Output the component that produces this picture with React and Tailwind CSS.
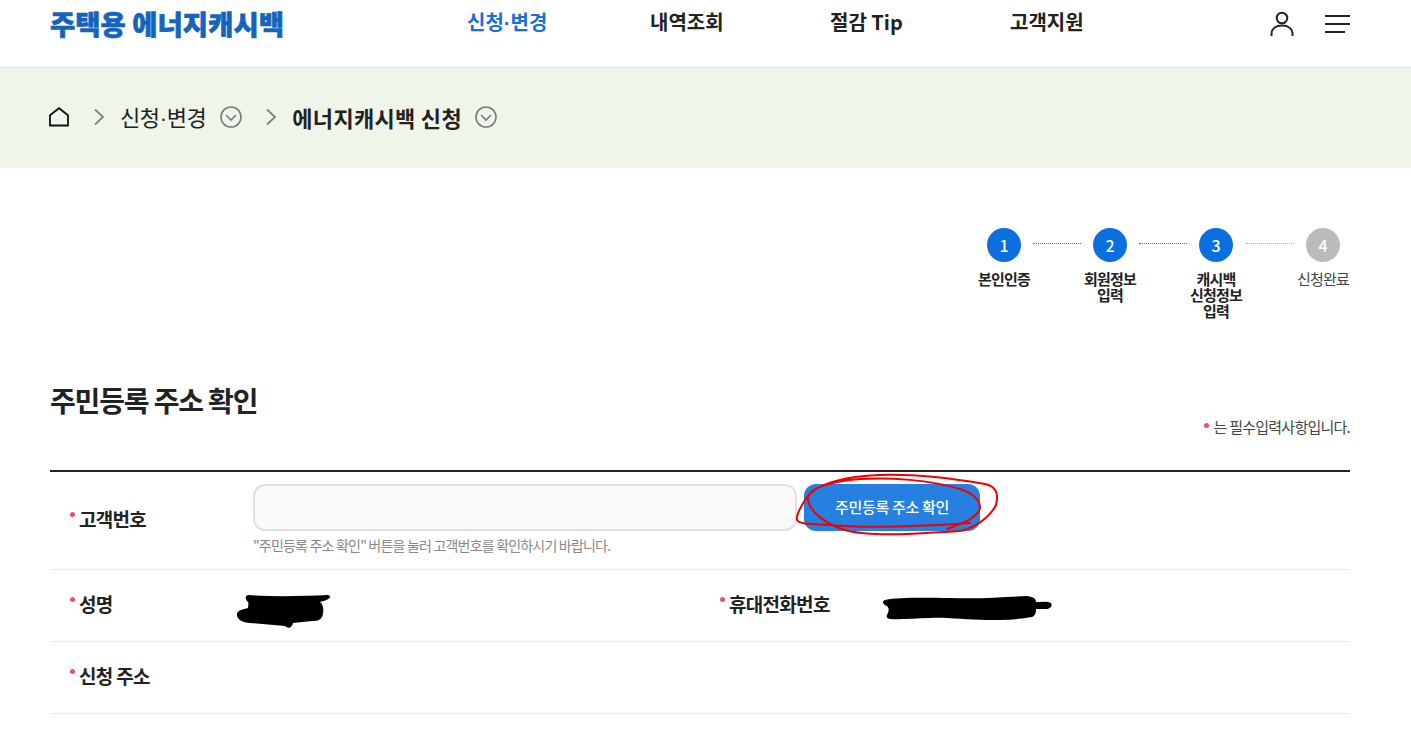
import React from "react";

const font = { fontFamily: '"Noto Sans CJK KR", "Noto Sans", sans-serif' };

const steps = [
  { no: 1, label: ["본인인증"], done: true },
  { no: 2, label: ["회원정보", "입력"], done: true },
  { no: 3, label: ["캐시백", "신청정보", "입력"], done: true },
  { no: 4, label: ["신청완료"], done: false },
];

const HomeIcon = () => (
  <svg width="20" height="20" viewBox="0 0 20 20" fill="none" stroke="#111" strokeWidth="1.8">
    <path d="M1 18.5V8.2L10 1.2L19 8.2V18.5Z" />
  </svg>
);

const Chevron = () => (
  <svg width="12" height="18" viewBox="0 0 12 18" fill="none" stroke="#808080" strokeWidth="1.8">
    <path d="M2 1.5L10 9L2 16.5" />
  </svg>
);

const CircleDown = () => (
  <svg width="22" height="22" viewBox="0 0 22 22" fill="none" stroke="#7b7b7b" strokeWidth="1.6">
    <circle cx="11" cy="11" r="10" />
    <path d="M6 9L11 14L16 9" />
  </svg>
);

const UserIcon = () => (
  <svg width="24" height="26" viewBox="0 0 24 26" fill="none" stroke="#222" strokeWidth="2">
    <circle cx="12" cy="7" r="5.3" />
    <path d="M1.5 25V23C1.5 17.5 6 14.5 12 14.5C18 14.5 22.5 17.5 22.5 23V25" />
  </svg>
);

const MiddleDot = () => <span className="font-['Liberation_Sans']">·</span>;

const Label = ({ children }) => (
  <span className="relative text-[19px] font-semibold leading-none text-[#222] tracking-[-0.7px]">
    <span className="absolute left-[-9px] top-[7px] w-[5px] h-[5px] rounded-full bg-[#ec4d77]" />
    {children}
  </span>
);

export default function App() {
  return (
    <div className="h-[729px] overflow-hidden bg-white relative" style={font}>
      {/* Header */}
      <header className="h-[68px] border-b border-[#e2e2e2] flex pl-[50px] pr-[61px]">
        <div className="w-[417px] text-[#1464bc] text-[27.5px] font-black leading-[47px] whitespace-nowrap [-webkit-text-stroke:0.6px_#1464bc]">
          주택용 에너지캐시백
        </div>
        <nav className="flex h-[44px] items-center text-[20px] font-semibold text-[#222]">
          <span className="text-[#1a6fe0] w-[183px]">신청<MiddleDot />변경</span>
          <span className="w-[180px]">내역조회</span>
          <span className="w-[180px]">절감 Tip</span>
          <span>고객지원</span>
        </nav>
        <div className="ml-auto flex items-start gap-[31px] pt-[11px]">
          <UserIcon />
          <div className="flex flex-col gap-[6px] w-[25px] pt-[4px]">
            <div className="h-[2px] bg-[#222]" />
            <div className="h-[2px] bg-[#222]" />
            <div className="h-[2px] w-[20px] bg-[#222]" />
          </div>
        </div>
      </header>

      {/* Breadcrumb */}
      <div className="h-[100px] bg-[#f0f5ea] flex items-center pl-[49px] pb-[2px] text-[#222]">
        <HomeIcon />
        <span className="ml-[24px]"><Chevron /></span>
        <span className="ml-[15px] text-[22px] tracking-[-0.4px]">신청<MiddleDot />변경</span>
        <span className="ml-[14px]"><CircleDown /></span>
        <span className="ml-[23px]"><Chevron /></span>
        <span className="ml-[15px] text-[22px] font-bold tracking-[0.3px]">에너지캐시백 신청</span>
        <span className="ml-[13px]"><CircleDown /></span>
      </div>

      {/* Steps */}
      <div className="flex justify-end pr-[61px] pt-[60px] h-[196px]">
        {steps.map((s, i) => (
          <React.Fragment key={s.no}>
            <div className="w-[54px] flex flex-col items-center">
              <div className={`w-[34px] h-[34px] rounded-full flex items-center justify-center text-white text-[16px] font-medium ${s.done ? "bg-[#0b6fe0]" : "bg-[#bbbbbb]"}`}>
                {s.no}
              </div>
              <div className={`mt-[9px] text-center text-[15px] leading-[16px] tracking-[-0.75px] whitespace-nowrap ${s.done ? "font-semibold text-[#222]" : "text-[#444]"}`}>
                {s.label.map((l) => (
                  <div key={l}>{l}</div>
                ))}
              </div>
            </div>
            {i < 3 && (
              <div className={`w-[48px] mr-[2px] mt-[15px] h-0 border-t border-dotted ${i === 2 ? "ml-[3px] border-[#aaaaaa]" : "ml-[2px] border-[#1a6fe0]"}`} />
            )}
          </React.Fragment>
        ))}
      </div>

      {/* Form */}
      <section className="ml-[50px] mr-[61px]">
        <div className="flex justify-between items-start">
          <h2 className="text-[28px] font-semibold leading-[40px] mt-[16px] tracking-[-1.15px] text-[#222]">주민등록 주소 확인</h2>
          <p className="mt-[53px] text-[15px] leading-[20px] text-[#444] tracking-[-0.75px] flex items-center">
            <span className="w-[5px] h-[5px] rounded-full bg-[#ec4d77] mr-[4px] mb-[3px]" />
            는 필수입력사항입니다.
          </p>
        </div>
        <div className="mt-[33px] border-t-2 border-[#222]">
          <div className="h-[98px] border-b border-[#e8e8e8] flex">
            <div className="w-[203px] pl-[29px] pt-[36px]">
              <Label>고객번호</Label>
            </div>
            <div className="pt-[12px]">
              <div className="flex gap-[7px]">
                <input className="w-[544px] h-[47px] rounded-xl border-2 border-[#e0e0e0] bg-[#fafafa]" />
                <button className="relative w-[176px] h-[47px] rounded-xl bg-[#2680e0] text-white text-[15px] font-medium tracking-[-0.3px]">
                  주민등록 주소 확인
                  <svg className="absolute left-[-14px] top-[-12px]" width="220" height="70" viewBox="790 472 220 70" fill="none" stroke="#f00000" strokeWidth="2" strokeLinecap="round">
                    <path d="M947 529C960 524 978 518 980 508C980 500 975 494 960 489C930 480 890 477 860 479C835 481 810 487 808 497C807 510 825 524 845 530C870 537 915 534 960 531C975 528 990 517 996 505C999 494 996 486 985 484C950 478 910 474 880 475C850 476 815 482 805 500C800 508 796 516 797 520C800 525 815 524 830 525C870 529 925 526 970 523" />
                  </svg>
                </button>
              </div>
              <p className="mt-[5px] text-[14px] leading-[18px] text-[#888888] tracking-[-0.8px]">
                "주민등록 주소 확인" 버튼을 눌러 고객번호를 확인하시기 바랍니다.
              </p>
            </div>
          </div>

          <div className="h-[72px] border-b border-[#e8e8e8] flex relative">
            <div className="w-[679px] pl-[29px] pt-[23px]">
              <Label>성명</Label>
            </div>
            <div className="pt-[23px]">
              <Label>휴대전화번호</Label>
            </div>
            {/* redacted values */}
            <svg className="absolute left-[180px] top-[20px]" width="110" height="44" viewBox="230 590 110 44" fill="#000">
              <path d="M248 595C275 597 305 596 328 595C332 596 331 599 320 602C324 605 324 612 322 617C320 620 318 621 312 621L293 623C292 628 288 629 285 626L250 623C242 623 236 619 237 613C239 610 244 609 248 608C248 606 249 604 248 602C245 599 245 596 248 595Z" />
            </svg>
            <svg className="absolute left-[830px] top-[22px]" width="180" height="34" viewBox="880 592 180 34" fill="#000">
              <path d="M885 600C900 597 925 598 950 598C980 599 1005 597 1027 596C1034 597 1036 599 1036 602C1042 602 1048 601 1051 603C1053 606 1050 609 1046 609L1036 609C1036 613 1035 616 1032 617C1015 620 1000 620 987 620C965 620 945 617 930 618C915 618 900 620 890 619C886 618 886 616 888 613C889 610 889 608 887 606C882 604 882 601 885 600Z" />
            </svg>
          </div>

          <div className="h-[72px] border-b border-[#e8e8e8] pl-[29px] pt-[23px]">
            <Label>신청 주소</Label>
          </div>
        </div>
      </section>
    </div>
  );
}
